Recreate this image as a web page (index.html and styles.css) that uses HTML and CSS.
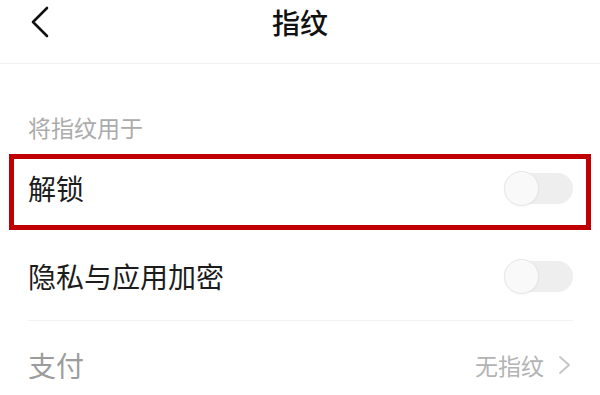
FILE: index.html
```html
<!DOCTYPE html>
<html lang="zh-CN">
<head>
<meta charset="utf-8">
<title>指纹</title>
<link rel="stylesheet" href="styles.css">
</head>
<body>
<div class="page">
  <header class="topbar">
    <div class="back">
      <svg width="20" height="32" viewBox="0 0 20 32" aria-hidden="true">
        <polyline points="17,2 3,16 17,30" fill="none" stroke="#111" stroke-width="2.6" stroke-linecap="round" stroke-linejoin="round"/>
      </svg>
    </div>
    <h1 class="title">指纹</h1>
    <div class="spacer"></div>
  </header>

  <main class="content">
    <div class="section-label">将指纹用于</div>
    <ul class="list">
      <li class="row highlighted">
        <span class="row-label">解锁</span>
        <span class="switch"><span class="knob"></span></span>
      </li>
      <li class="row">
        <span class="row-label">隐私与应用加密</span>
        <span class="switch"><span class="knob"></span></span>
      </li>
      <li class="row divided disabled">
        <span class="row-label">支付</span>
        <span class="row-value">无指纹
          <svg class="chev" width="14" height="20" viewBox="0 0 14 20" aria-hidden="true">
            <polyline points="2,2 11,10 2,18" fill="none" stroke="#c4c4c4" stroke-width="1.8" stroke-linecap="round" stroke-linejoin="round"/>
          </svg>
        </span>
      </li>
    </ul>
  </main>
</div>
</body>
</html>
```

FILE: styles.css
```css
html, body {
  margin: 0;
  padding: 0;
  background: #ffffff;
}

body {
  font-family: "Noto Sans CJK SC", "Noto Sans", sans-serif;
  color: #1a1a1a;
}

.page {
  width: 600px;
  height: 395px;
  overflow: hidden;
  background: #ffffff;
}

.topbar {
  display: grid;
  grid-template-columns: 1fr auto 1fr;
  align-items: center;
  height: 44px;
  padding-bottom: 19px;
  border-bottom: 1px solid #f1f1f1;
}

.back {
  padding-left: 30px;
  display: flex;
  align-items: center;
}

.back svg {
  display: block;
}

.title {
  margin: 0;
  font-size: 28px;
  font-weight: 500;
  line-height: 44px;
  color: #111111;
}

.content {
  padding: 0 27px 0 28px;
}

.section-label {
  padding-top: 48px;
  padding-bottom: 2px;
  font-size: 23px;
  line-height: 30px;
  color: #ababab;
}

.list {
  list-style: none;
  margin: 0;
  padding: 0;
}

.row {
  height: 88px;
  display: flex;
  align-items: center;
  justify-content: space-between;
  font-size: 28px;
  color: #1c1c1c;
  box-sizing: border-box;
}

.row.divided {
  border-top: 1px solid #f2f2f2;
}

.row.highlighted {
  position: relative;
}

.row.highlighted::after {
  content: "";
  position: absolute;
  left: -19px;
  right: -18px;
  top: 10px;
  bottom: 2px;
  border: 5px solid #c00000;
  pointer-events: none;
}

.row.disabled .row-label {
  color: #9c9c9c;
}

.row-value {
  display: flex;
  align-items: center;
  gap: 14px;
  font-size: 23px;
  color: #b3b3b3;
  margin-right: 1px;
}

.chev {
  display: block;
}

.switch {
  position: relative;
  width: 68px;
  height: 31px;
  border-radius: 16px;
  background: #eeeeee;
  display: flex;
  align-items: center;
}

.knob {
  position: absolute;
  left: -1px;
  top: -2px;
  width: 33px;
  height: 33px;
  border-radius: 50%;
  background: #f9f9f9;
  border: 1px solid #e6e6e6;
  box-shadow: 0 1px 2px rgba(0, 0, 0, 0.04);
}
```
